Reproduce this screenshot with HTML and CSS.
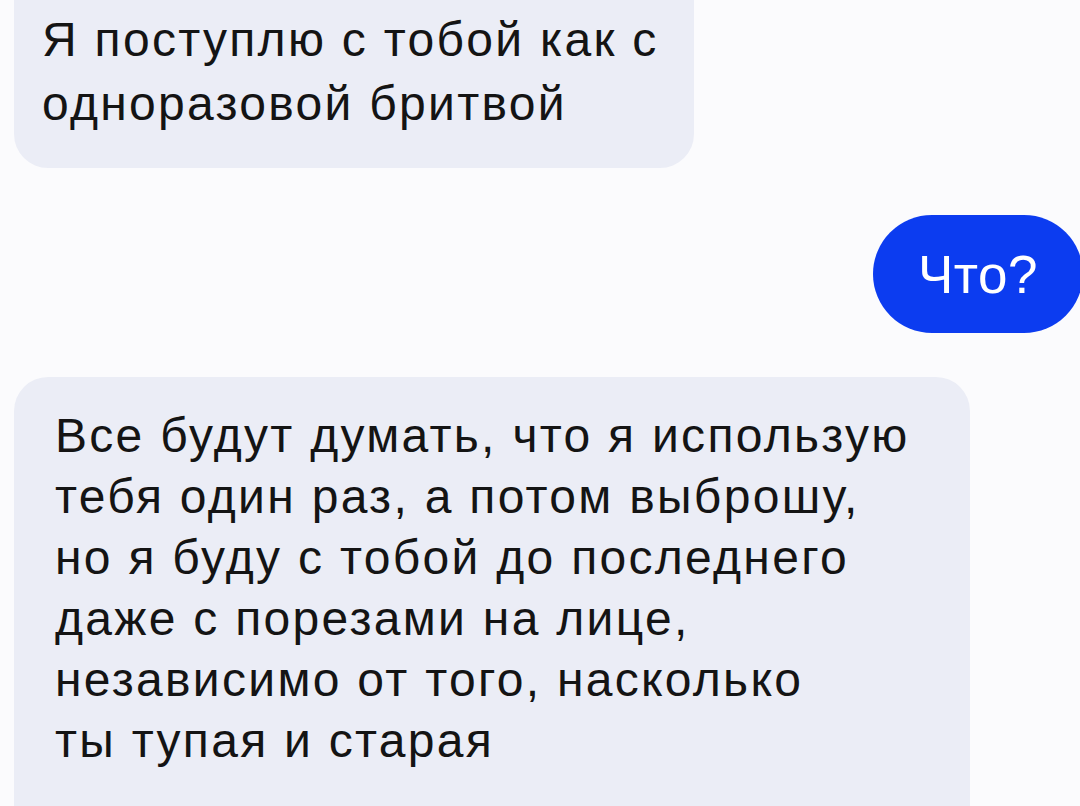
FILE: index.html
```html
<!DOCTYPE html>
<html lang="ru">
<head>
    <meta charset="UTF-8">
    <meta name="viewport" content="width=device-width, initial-scale=1.0">
    <title>Чат</title>
    <link rel="stylesheet" href="styles.css">
</head>
<body>

<main class="chat">
    <div class="msg msg-in msg-first">
        <p>Я поступлю с тобой как с<br>одноразовой бритвой</p>
    </div>

    <div class="msg msg-out">
        <p>Что?</p>
    </div>

    <div class="msg msg-in msg-long">
        <p>Все будут думать, что я использую<br>тебя один раз, а потом выброшу,<br>но я буду с тобой до последнего<br>даже с порезами на лице,<br>независимо от того, насколько<br>ты тупая и старая</p>
    </div>
</main>

</body>
</html>
```

FILE: styles.css
```css
:root {
    --bg-color: #fbfbfd;
    --bubble-in: #ebedf6;
    --bubble-out: #0c3cf0;
    --text-color: #141414;
    --font-sans: 'Liberation Sans', Arial, sans-serif;
}

/* --- Resets --- */
* { margin: 0; padding: 0; box-sizing: border-box; }
html, body {
    width: 1080px;
    height: 806px;
    overflow: hidden;
}
body {
    background-color: var(--bg-color);
    color: var(--text-color);
    font-family: var(--font-sans);
}

/* --- Message list --- */
.chat {
    display: flex;
    flex-direction: column;
    padding-left: 14px;
}

.msg {
    font-size: 48px;
}

/* incoming bubbles */
.msg-in {
    align-self: flex-start;
    background-color: var(--bubble-in);
    border-radius: 34px;
    letter-spacing: 2.3px;
}
.msg-first {
    width: 680px;
    margin-top: -40px;
    padding: 48px 20px 32px 28px;
    line-height: 64px;
}
.msg-long {
    width: 956px;
    margin-top: 44px;
    padding: 28px 20px 80px 41px;
    line-height: 61px;
}

/* outgoing bubble, runs off the right edge */
.msg-out {
    align-self: flex-end;
    height: 118px;
    margin-top: 47px;
    margin-right: -3px;
    padding: 0 45px;
    display: flex;
    align-items: center;
    background-color: var(--bubble-out);
    color: #ffffff;
    font-size: 53px;
    letter-spacing: 0.5px;
    border-radius: 59px;
}
```
